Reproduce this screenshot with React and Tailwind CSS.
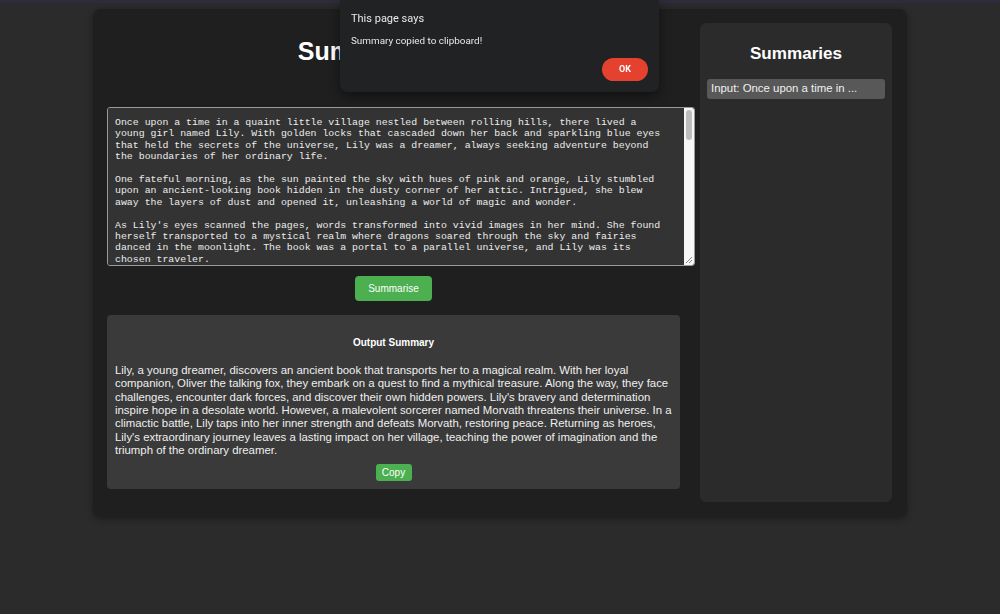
import React from "react";

const story = `Once upon a time in a quaint little village nestled between rolling hills, there lived a young girl named Lily. With golden locks that cascaded down her back and sparkling blue eyes that held the secrets of the universe, Lily was a dreamer, always seeking adventure beyond the boundaries of her ordinary life.

One fateful morning, as the sun painted the sky with hues of pink and orange, Lily stumbled upon an ancient-looking book hidden in the dusty corner of her attic. Intrigued, she blew away the layers of dust and opened it, unleashing a world of magic and wonder.

As Lily's eyes scanned the pages, words transformed into vivid images in her mind. She found herself transported to a mystical realm where dragons soared through the sky and fairies danced in the moonlight. The book was a portal to a parallel universe, and Lily was its chosen traveler.

In this enchanting world, Lily met a talking fox named Oliver, who became her loyal companion. Together, they embarked on a quest to find the legendary Crystal of Dreams, a mythical treasure said to grant the deepest wishes of anyone who possessed it.

Along the way, they faced countless challenges. They crossed treacherous rivers, climbed towering mountains, and ventured through dark forests filled with shadowy creatures. With each obstacle, Lily discovered hidden powers within herself that she never knew existed.

News of their journey spread across the land, and Lily's bravery and determination inspired hope in the hearts of those who had long given up on their dreams. But not everyone welcomed their quest. A malevolent sorcerer named Morvath sought the Crystal for himself, threatening to plunge the universe into eternal darkness.

In a climactic battle atop the highest peak, Lily tapped into her inner strength. With Oliver by her side, she defeated Morvath and restored peace to the realm. The Crystal of Dreams glowed brightly, and its light spread across the land.

Returning home as heroes, Lily and Oliver shared their tale with the villagers. Lily's extraordinary journey left a lasting impact on her village, teaching everyone the power of imagination and the triumph of the ordinary dreamer.`;

const summary =
  "Lily, a young dreamer, discovers an ancient book that transports her to a magical realm. With her loyal companion, Oliver the talking fox, they embark on a quest to find a mythical treasure. Along the way, they face challenges, encounter dark forces, and discover their own hidden powers. Lily's bravery and determination inspire hope in a desolate world. However, a malevolent sorcerer named Morvath threatens their universe. In a climactic battle, Lily taps into her inner strength and defeats Morvath, restoring peace. Returning as heroes, Lily's extraordinary journey leaves a lasting impact on her village, teaching the power of imagination and the triumph of the ordinary dreamer.";

export default function App() {
  return (
    <div
      className="relative min-h-[614px] w-[1000px] bg-[#2b2b2b] text-white"
      style={{ fontFamily: '"Liberation Sans", Arial, sans-serif' }}
    >
      <div className="h-[3px] bg-[#2c2c3c]" />
      <div className="mx-auto mt-[6px] flex w-[814px] gap-[20px] rounded-lg bg-[#1f1f1f] pl-[14px] pr-[15px] pt-[14px] pb-[15px] shadow-[0_2px_6px_rgba(0,0,0,0.35)]">
        <div className="flex w-[573px] flex-col">
          <h1 className="mt-[14px] mb-[42px] text-center text-[25px] font-bold leading-[28px]">
            Summarise Text
          </h1>
          <div className="relative h-[159px] w-[588px]">
            <textarea
              defaultValue={story}
              className="block h-[159px] w-[588px] resize-none rounded-[3px] border border-[#9a9a9a] bg-[#333333] pl-[7px] pr-[28px] pt-[9px] pb-[4px] text-[9.9px] leading-[11.4px] text-[#ececec] outline-none [scrollbar-width:none]"
              style={{ fontFamily: '"Liberation Mono", "Courier New", monospace' }}
            />
            <div className="absolute top-[1px] right-[1px] bottom-[1px] w-[10px] rounded-r-[2px] bg-[#f6f6f6]">
              <div className="mx-auto mt-[2px] h-[30px] w-[6px] rounded-full bg-[#bdbdbd]" />
              <svg
                className="absolute bottom-[1px] right-[1px]"
                width="8"
                height="8"
                viewBox="0 0 8 8"
              >
                <path d="M7 1L1 7M7 4L4 7" stroke="#8a8a8a" strokeWidth="1" />
              </svg>
            </div>
          </div>
          <div className="mt-[10px] flex justify-center">
            <button className="h-[25px] w-[77px] rounded-[4px] bg-[#4caf50] text-[10px] text-white">
              Summarise
            </button>
          </div>
          <div className="mt-[14px] flex w-[573px] flex-col items-center rounded-[4px] bg-[#3a3a3a] px-[6px] pt-[21px] pb-[8px]">
            <h2 className="text-[10px] font-bold leading-[14px]">Output Summary</h2>
            <p className="mt-[14px] w-full pl-[2px] text-[11.4px] leading-[13.35px] text-[#efefef]">
              {summary}
            </p>
            <button className="mt-[7px] h-[17px] w-[36px] rounded-[3px] bg-[#4caf50] text-[10px] text-white">
              Copy
            </button>
          </div>
        </div>
        <div className="flex h-[479px] w-[192px] flex-col rounded-md bg-[#2b2b2b] px-[7px] pt-[20px]">
          <h2 className="text-center text-[17.1px] font-bold leading-[22px]">Summaries</h2>
          <div className="mt-[14px] flex h-[20px] items-center rounded-[3px] bg-[#585858] pl-[4px] text-[11.4px] text-[#f0f0f0]">
            Input: Once upon a time in ...
          </div>
        </div>
      </div>

      <div
        className="absolute left-[340px] top-0 h-[92px] w-[319px] rounded-b-lg bg-[#212224] px-[11px] pt-[12px] shadow-[0_4px_12px_rgba(0,0,0,0.45)]"
        style={{ fontFamily: 'Roboto, "Noto Sans", sans-serif' }}
      >
        <div className="text-[11px] leading-[14px] text-[#e8e8e8]">This page says</div>
        <div className="mt-[9px] text-[9.9px] leading-[12px] text-[#e8e8e8]">
          Summary copied to clipboard!
        </div>
        <div className="mt-[11px] flex justify-end">
          <button className="h-[23px] w-[46px] rounded-full bg-[#e5412f] text-[9px] font-bold text-white">
            OK
          </button>
        </div>
      </div>
    </div>
  );
}
